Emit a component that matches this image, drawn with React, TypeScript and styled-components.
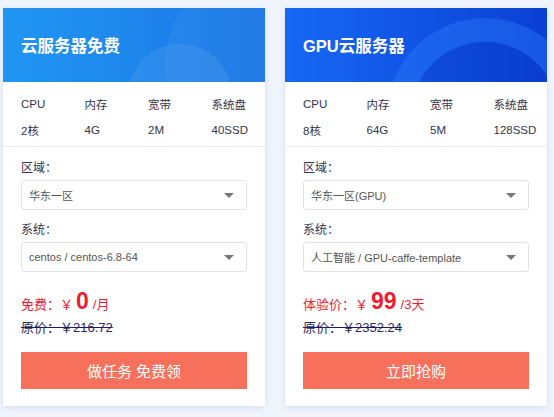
import React from "react";
import styled, { createGlobalStyle } from "styled-components";

const GlobalStyle = createGlobalStyle`
    html, body {
        margin: 0;
        padding: 0;
        background: #f0f5fd;
    }
    body {
        font-family: "Liberation Sans", "Noto Sans CJK SC", sans-serif;
        color: #333;
    }
`;

const Page = styled.div`
    display: flex;
    gap: 20px;
    padding: 8px 0 0 3px;
    height: 409px;
`;

const Card = styled.div`
    width: 262px;
    height: 398px;
    background: #fff;
    box-shadow: 0 2px 6px rgba(30, 70, 150, 0.12);
    display: flex;
    flex-direction: column;
`;

const Header = styled.div<{ $from: string; $to: string }>`
    position: relative;
    height: 74px;
    overflow: hidden;
    background: linear-gradient(90deg, ${(p) => p.$from}, ${(p) => p.$to});
    display: flex;
    align-items: center;
    padding-left: 18px;
`;

const Deco = styled.svg`
    position: absolute;
    left: 0;
    top: 0;
`;

const Title = styled.h2`
    position: relative;
    margin: 0;
    font-size: 16.5px;
    font-weight: 700;
    color: #fff;
`;

const Specs = styled.div`
    display: grid;
    grid-template-columns: repeat(4, 63.5px);
    grid-auto-rows: 26px;
    align-items: center;
    padding: 9px 18px 3px;
    border-bottom: 1px solid #e6eaf0;
    font-size: 11.5px;
    color: #33334a;
`;

const Form = styled.div`
    display: flex;
    flex-direction: column;
    padding: 11px 18px 0;
`;

const Label = styled.div`
    font-size: 12px;
    line-height: 20px;
    color: #33334a;
    margin-bottom: 2px;
`;

const SelectBox = styled.div`
    height: 28px;
    border: 1px solid #e3e3e3;
    border-radius: 3px;
    display: flex;
    align-items: center;
    justify-content: space-between;
    padding: 0 12px 0 7px;
    font-size: 11px;
    color: #555;
    margin-bottom: 10px;
`;

const Caret = styled.span`
    width: 0;
    height: 0;
    border-left: 5px solid transparent;
    border-right: 5px solid transparent;
    border-top: 5px solid #777;
`;

const PriceRow = styled.div`
    margin-top: 6px;
    height: 26px;
    display: flex;
    align-items: baseline;
    color: #ef1d32;
    font-size: 13px;
`;

const Amount = styled.span`
    font-size: 23px;
    font-weight: 700;
    margin: 0 4px 0 3px;
`;

const OldPrice = styled.div`
    margin-top: 4px;
    font-size: 13px;
    line-height: 20px;
    color: #2c2c5a;
    text-decoration: line-through;
    text-decoration-color: #1b1b6a;
`;

const Action = styled.button`
    margin-top: 14px;
    height: 37px;
    border: none;
    background: #f7705c;
    color: #fff;
    font-family: inherit;
    font-size: 15px;
    cursor: pointer;
`;

type Plan = {
    title: string;
    from: string;
    to: string;
    specs: string[];
    region: string;
    system: string;
    priceLabel: string;
    amount: string;
    unit: string;
    old: string;
    action: string;
    deco: React.ReactNode;
};

const plans: Plan[] = [
    {
        title: "云服务器免费",
        from: "#2196f3",
        to: "#1a76e6",
        specs: ["2核", "4G", "2M", "40SSD"],
        region: "华东一区",
        system: "centos / centos-6.8-64",
        priceLabel: "免费：￥",
        amount: "0",
        unit: "/月",
        old: "原价：￥216.72",
        action: "做任务 免费领",
        deco: (
            <>
                <circle cx="250" cy="55" r="88" fill="#ffffff" opacity="0.035" />
                <circle cx="177" cy="88" r="52" fill="#ffffff" opacity="0.07" />
            </>
        ),
    },
    {
        title: "GPU云服务器",
        from: "#1768f5",
        to: "#0a40d4",
        specs: ["8核", "64G", "5M", "128SSD"],
        region: "华东一区(GPU)",
        system: "人工智能 / GPU-caffe-template",
        priceLabel: "体验价：￥",
        amount: "99",
        unit: "/3天",
        old: "原价：￥2352.24",
        action: "立即抢购",
        deco: (
            <>
                <circle cx="200" cy="108" r="86" fill="none" stroke="#2a7cff" strokeWidth="24" opacity="0.4" />
                <circle cx="200" cy="108" r="74" fill="#0636c4" opacity="0.25" />
            </>
        ),
    },
];

const specNames = ["CPU", "内存", "宽带", "系统盘"];

function PlanCard({ plan }: { plan: Plan }) {
    return (
        <Card>
            <Header $from={plan.from} $to={plan.to}>
                <Deco width="262" height="74" viewBox="0 0 262 74">
                    {plan.deco}
                </Deco>
                <Title>{plan.title}</Title>
            </Header>
            <Specs>
                {specNames.map((n) => (
                    <span key={n}>{n}</span>
                ))}
                {plan.specs.map((v, i) => (
                    <span key={i}>{v}</span>
                ))}
            </Specs>
            <Form>
                <Label>区域：</Label>
                <SelectBox>
                    {plan.region}
                    <Caret />
                </SelectBox>
                <Label>系统：</Label>
                <SelectBox>
                    {plan.system}
                    <Caret />
                </SelectBox>
                <PriceRow>
                    {plan.priceLabel}
                    <Amount>{plan.amount}</Amount>
                    {plan.unit}
                </PriceRow>
                <OldPrice>{plan.old}</OldPrice>
                <Action>{plan.action}</Action>
            </Form>
        </Card>
    );
}

export default function App() {
    return (
        <>
            <GlobalStyle />
            <Page>
                {plans.map((p) => (
                    <PlanCard key={p.title} plan={p} />
                ))}
            </Page>
        </>
    );
}
